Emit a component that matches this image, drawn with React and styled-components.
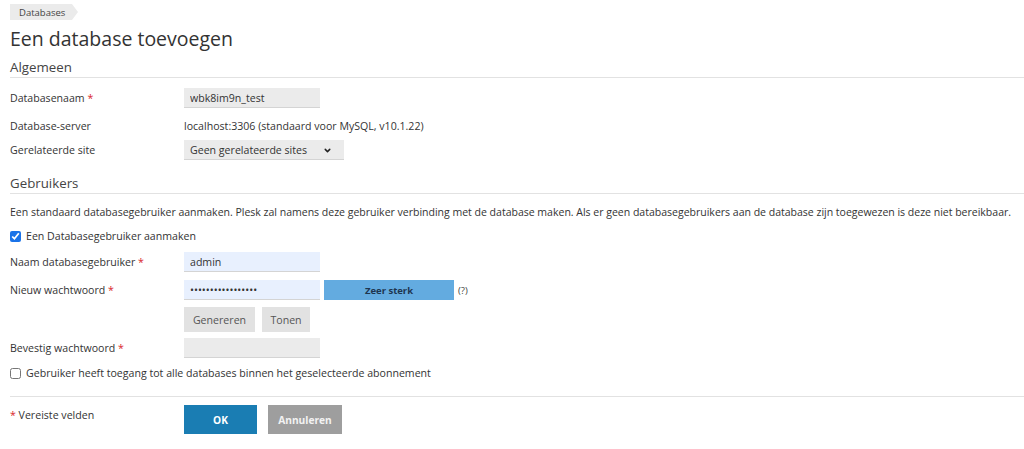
import React from 'react';
import styled, { createGlobalStyle } from 'styled-components';
import { ChevronDown } from 'lucide-react';

const GlobalStyle = createGlobalStyle`
  html, body {
    margin: 0;
    padding: 0;
    background: #fff;
  }
  body {
    font-family: 'Open Sans', 'Noto Sans', sans-serif;
    font-size: 10.6px;
    color: #333;
  }
  * { box-sizing: border-box; }
`;

const Page = styled.div`
  padding: 4px 0 0 10px;
`;

const Crumb = styled.div`
  position: relative;
  display: inline-flex;
  align-items: center;
  height: 16px;
  padding: 0 7px 0 9px;
  background: #ebebeb;
  font-size: 9.5px;
  color: #444;
  &:after {
    content: '';
    position: absolute;
    right: -6px;
    top: 0;
    border-top: 8px solid transparent;
    border-bottom: 8px solid transparent;
    border-left: 6px solid #ebebeb;
  }
`;

const Title = styled.h1`
  margin: 4px 0 0;
  font-size: 19.5px;
  line-height: 30px;
  font-weight: 400;
  color: #333;
`;

const SectionHead = styled.h2`
  margin: ${({ $top }) => $top}px 0 0;
  height: 20px;
  font-size: 13.3px;
  line-height: 19px;
  font-weight: 400;
  color: #444;
  border-bottom: 1px solid #e2e2e2;
`;

const Row = styled.div`
  display: grid;
  grid-template-columns: 174px auto;
  align-items: center;
  margin-top: ${({ $top }) => $top}px;
  min-height: 20px;
`;

const Label = styled.label`
  font-size: 10.6px;
  line-height: 20px;
  color: #333;
`;

const Req = styled.span`
  color: #d9262b;
`;

const Field = styled.div`
  display: flex;
  align-items: center;
  gap: ${({ $gap }) => $gap || 0}px;
`;

const Input = styled.input`
  width: 136px;
  height: 20px;
  padding: 0 6px;
  border: none;
  border-bottom: 1px solid #d4d4d4;
  background: ${({ $filled }) => ($filled ? '#e8f0fe' : '#ebebeb')};
  font-family: inherit;
  font-size: 10.6px;
  color: #333;
  outline: none;
  &[type='password'] {
    font-size: 10.5px;
    letter-spacing: 0;
  }
`;

const SelectWrap = styled.div`
  position: relative;
  width: 160px;
  height: 20px;
  svg {
    position: absolute;
    right: 12px;
    top: 6px;
    pointer-events: none;
  }
`;

const Select = styled.select`
  appearance: none;
  width: 100%;
  height: 20px;
  padding: 0 6px;
  border: none;
  border-bottom: 1px solid #d4d4d4;
  background: #ebebeb;
  font-family: inherit;
  font-size: 10.6px;
  color: #333;
  outline: none;
`;

const Value = styled.span`
  font-size: 10.6px;
  line-height: 20px;
`;

const Strength = styled.div`
  width: 130px;
  height: 20px;
  display: flex;
  align-items: center;
  justify-content: center;
  background: #63abe0;
  font-size: 9.5px;
  font-weight: 700;
  color: #1e3650;
`;

const Hint = styled.span`
  font-size: 9.5px;
  color: #444;
`;

const Text = styled.p`
  margin: 9px 0 0;
  font-size: 10.55px;
  line-height: 18px;
  white-space: nowrap;
  letter-spacing: -0.02px;
`;

const Check = styled.label`
  display: flex;
  align-items: center;
  gap: 5px;
  margin-top: ${({ $top }) => $top}px;
  font-size: 10.6px;
  line-height: 18px;
  input {
    width: 11px;
    height: 11px;
    margin: 0;
    accent-color: #1a73e8;
  }
`;

const Button = styled.button`
  height: ${({ $primary, $cancel }) => ($primary || $cancel ? 29 : 25)}px;
  width: ${({ $w }) => $w}px;
  border: none;
  padding: 0;
  font-family: inherit;
  font-size: ${({ $primary, $cancel }) => ($primary || $cancel ? 10.2 : 10.6)}px;
  font-weight: ${({ $primary, $cancel }) => ($primary || $cancel ? 700 : 400)};
  background: ${({ $primary, $cancel }) =>
    $primary ? '#1a7db3' : $cancel ? '#9e9e9e' : '#e2e2e2'};
  color: ${({ $primary, $cancel }) => ($primary ? '#fff' : $cancel ? '#f2f2f2' : '#555')};
  cursor: pointer;
`;

const Footer = styled.div`
  margin-top: 14px;
  border-top: 1px solid #e2e2e2;
  padding-top: 8px;
  display: grid;
  grid-template-columns: 174px auto;
  align-items: start;
`;

const App = () => (
  <>
    <GlobalStyle />
    <Page>
      <Crumb>Databases</Crumb>
      <Title>Een database toevoegen</Title>

      <SectionHead $top={4}>Algemeen</SectionHead>
      <Row $top={10}>
        <Label>Databasenaam <Req>*</Req></Label>
        <Field>
          <Input defaultValue="wbk8im9n_test" />
        </Field>
      </Row>
      <Row $top={8}>
        <Label>Database-server</Label>
        <Value>localhost:3306 (standaard voor MySQL, v10.1.22)</Value>
      </Row>
      <Row $top={4}>
        <Label>Gerelateerde site</Label>
        <SelectWrap>
          <Select defaultValue="none">
            <option value="none">Geen gerelateerde sites</option>
          </Select>
          <ChevronDown size={9} strokeWidth={4} color="#222" />
        </SelectWrap>
      </Row>

      <SectionHead $top={14}>Gebruikers</SectionHead>
      <Text>
        Een standaard databasegebruiker aanmaken. Plesk zal namens deze gebruiker verbinding met de database maken. Als er geen databasegebruikers aan de database zijn toegewezen is deze niet bereikbaar.
      </Text>
      <Check $top={6}>
        <input type="checkbox" defaultChecked />
        Een Databasegebruiker aanmaken
      </Check>
      <Row $top={7}>
        <Label>Naam databasegebruiker <Req>*</Req></Label>
        <Field>
          <Input $filled defaultValue="admin" />
        </Field>
      </Row>
      <Row $top={8}>
        <Label>Nieuw wachtwoord <Req>*</Req></Label>
        <Field $gap={4}>
          <Input $filled type="password" defaultValue="abcdefghijklmnopq" />
          <Strength>Zeer sterk</Strength>
          <Hint>(?)</Hint>
        </Field>
      </Row>
      <Row $top={7}>
        <span />
        <Field $gap={7}>
          <Button $w={71}>Genereren</Button>
          <Button $w={48}>Tonen</Button>
        </Field>
      </Row>
      <Row $top={6}>
        <Label>Bevestig wachtwoord <Req>*</Req></Label>
        <Field>
          <Input type="password" />
        </Field>
      </Row>
      <Check $top={6}>
        <input type="checkbox" />
        Gebruiker heeft toegang tot alle databases binnen het geselecteerde abonnement
      </Check>

      <Footer>
        <Label>
          <Req>*</Req> Vereiste velden
        </Label>
        <Field $gap={11}>
          <Button $primary $w={73}>OK</Button>
          <Button $cancel $w={74}>Annuleren</Button>
        </Field>
      </Footer>
    </Page>
  </>
);

export default App;
